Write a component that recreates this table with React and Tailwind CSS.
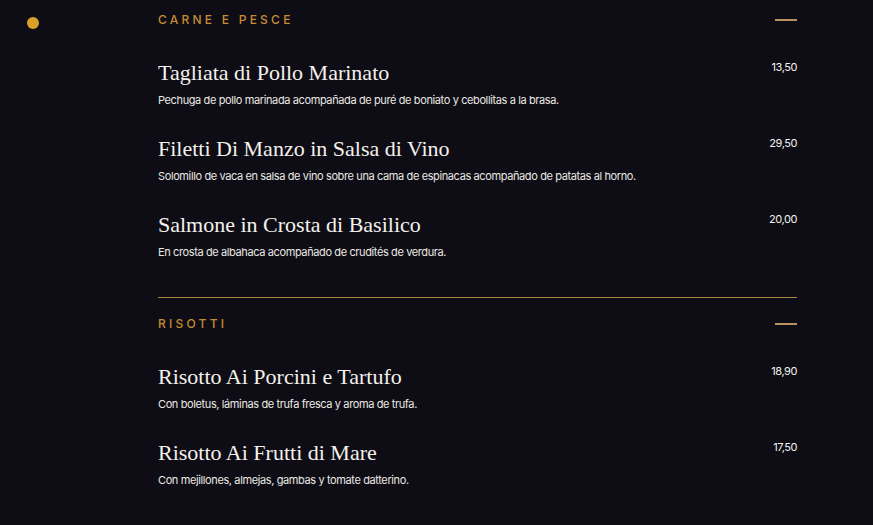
const sections = [
  {
    title: "CARNE E PESCE",
    items: [
      {
        name: "Tagliata di Pollo Marinato",
        desc: "Pechuga de pollo marinada acompañada de puré de boniato y cebollitas a la brasa.",
        price: "13,50",
      },
      {
        name: "Filetti Di Manzo in Salsa di Vino",
        desc: "Solomillo de vaca en salsa de vino sobre una cama de espinacas acompañado de patatas al horno.",
        price: "29,50",
      },
      {
        name: "Salmone in Crosta di Basilico",
        desc: "En crosta de albahaca acompañado de crudités de verdura.",
        price: "20,00",
      },
    ],
  },
  {
    title: "RISOTTI",
    items: [
      {
        name: "Risotto Ai Porcini e Tartufo",
        desc: "Con boletus, láminas de trufa fresca y aroma de trufa.",
        price: "18,90",
      },
      {
        name: "Risotto Ai Frutti di Mare",
        desc: "Con mejillones, almejas, gambas y tomate datterino.",
        price: "17,50",
      },
    ],
  },
];

function MenuItem({ item }) {
  return (
    <div className="flex items-start justify-between">
      <div>
        <h3 className="font-['Liberation_Serif',serif] text-[22px] leading-[28px] text-[#f4f1ea]">
          {item.name}
        </h3>
        <p className="mt-[5px] font-['Inter',sans-serif] text-[11px] leading-4 tracking-[-0.035em] text-[#ebe8e2]">
          {item.desc}
        </p>
      </div>
      <span className="font-['Inter',sans-serif] text-[11px] leading-4 tracking-[-0.04em] text-[#f4f1ea]">
        {item.price}
      </span>
    </div>
  );
}

export default function App() {
  return (
    <div className="flex h-[525px] w-full overflow-hidden bg-[#0e0d16]">
      <div className="w-[158px] shrink-0">
        <div className="ml-[27px] mt-[17px] h-3 w-3 rounded-full bg-[#d9a12a]" />
      </div>

      <div className="w-[639px] shrink-0">
        {sections.map((s, i) => (
          <section key={s.title} className={i === 0 ? "pt-px" : "pt-[7px]"}>
            <div className="flex h-[38px] items-center justify-between">
              <h2 className="font-['Inter',sans-serif] text-[12px] font-medium tracking-[0.27em] text-[#c88b32]">
                {s.title}
              </h2>
              <span className="h-[2px] w-[22px] bg-[#b8925a]" />
            </div>
            <div className="mt-5 flex flex-col gap-[27px]">
              {s.items.map((item) => (
                <MenuItem key={item.name} item={item} />
              ))}
            </div>
            {i === 0 && <div className="mt-[37px] h-px bg-[#a8853f]" />}
          </section>
        ))}
      </div>
    </div>
  );
}
